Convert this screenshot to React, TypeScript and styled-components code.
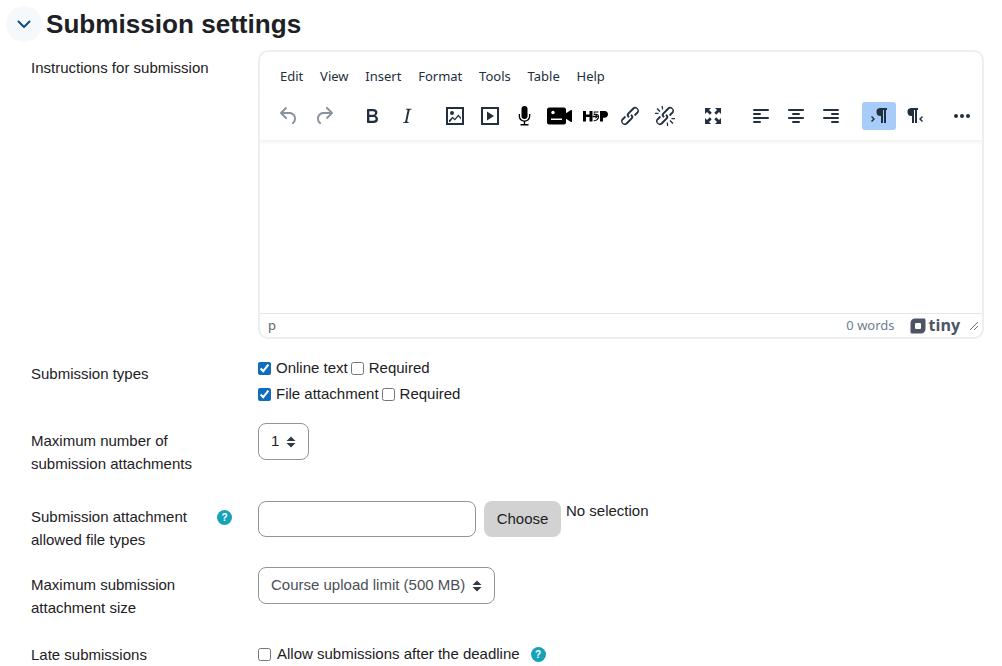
import { FC, ReactNode } from 'react';
import styled, { createGlobalStyle } from 'styled-components';

const GlobalStyle = createGlobalStyle`
  html, body {
    margin: 0;
    height: 666px;
    overflow: hidden;
    background: #fff;
  }
  body {
    font-family: "Liberation Sans", Arial, sans-serif;
    font-size: 15px;
    line-height: 22.5px;
    color: #1d2125;
  }
`;

const Icon: FC<{ children: ReactNode; color?: string }> = ({ children, color = '#222f3e' }) => (
  <svg width="24" height="24" viewBox="0 0 24 24" fill={color}>
    {children}
  </svg>
);

const LINK_PATH =
  'M6.2 12.3a1 1 0 0 1 1.4 1.4l-2 2a2 2 0 1 0 2.6 2.8l4.8-4.8a1 1 0 0 0 0-1.4 1 1 0 1 1 1.4-1.3 2.9 2.9 0 0 1 0 4L9.6 20a3.9 3.9 0 0 1-5.5-5.5l2-2Zm11.6-.6a1 1 0 0 1-1.4-1.4l2-2a2 2 0 1 0-2.6-2.8L11 10.3a1 1 0 0 0 0 1.4A1 1 0 1 1 9.6 13a2.9 2.9 0 0 1 0-4L14.4 4a3.9 3.9 0 0 1 5.5 5.5l-2 2Z';

const AlignIcon: FC<{ align: 'left' | 'center' | 'right' }> = ({ align }) => {
  const short = align === 'left' ? 4 : align === 'center' ? 8 : 12;
  return (
    <Icon>
      <rect x="4" y="5" width="16" height="2" rx="1" />
      <rect x={short} y="9" width="8" height="2" rx="1" />
      <rect x="4" y="13" width="16" height="2" rx="1" />
      <rect x={short} y="17" width="8" height="2" rx="1" />
    </Icon>
  );
};

const icons = {
  undo: (
    <Icon color="#8a939d">
      <path d="M6.4 8H12c3.7 0 6.2 2 6.8 5.1.6 2.7-.4 5.6-2.3 6.8a1 1 0 0 1-1-1.8c1.1-.6 1.8-2.7 1.4-4.6-.5-2.1-2.1-3.5-4.9-3.5H6.4l3.3 3.3a1 1 0 1 1-1.4 1.4l-5-5a1 1 0 0 1 0-1.4l5-5a1 1 0 0 1 1.4 1.4L6.4 8Z" />
    </Icon>
  ),
  redo: (
    <Icon color="#8a939d">
      <path d="M17.6 10H12c-2.8 0-4.4 1.4-4.9 3.5-.4 2 .3 4 1.4 4.6a1 1 0 1 1-1 1.8c-2-1.2-2.9-4.1-2.3-6.8.6-3 3-5.1 6.8-5.1h5.6l-3.3-3.3a1 1 0 1 1 1.4-1.4l5 5a1 1 0 0 1 0 1.4l-5 5a1 1 0 0 1-1.4-1.4l3.3-3.3Z" />
    </Icon>
  ),
  bold: (
    <Icon>
      <path d="M7.8 19c-.3 0-.5 0-.6-.2l-.2-.5V5.7c0-.2 0-.4.2-.5l.6-.2h5c1.5 0 2.7.3 3.5 1 .7.6 1.1 1.4 1.1 2.5a3 3 0 0 1-.6 1.9c-.4.6-1 1-1.6 1.2.4.1.9.3 1.3.6s.8.7 1 1.2c.4.4.5 1 .5 1.6 0 1.3-.4 2.3-1.3 3-.8.7-2.1 1-3.8 1H7.8Zm5-8.3c.6 0 1.2-.1 1.6-.5.4-.3.6-.7.6-1.3 0-1.1-.8-1.7-2.3-1.7H9.3v3.5h3.4Zm.5 6c.7 0 1.3-.1 1.7-.4.4-.4.6-.9.6-1.5s-.2-1-.7-1.4c-.4-.3-1-.4-2-.4H9.4v3.8h4Z" />
    </Icon>
  ),
  italic: (
    <Icon>
      <path d="M16.7 4.7l-.1.9h-.3c-.6 0-1 0-1.4.3-.3.3-.4.6-.5 1.1l-2.1 9.8v.6c0 .5.4.8 1.4.8h.2l-.2.8H8l.2-.8h.2c1.1 0 1.8-.5 2-1.5l2-9.8.1-.5c0-.6-.4-.8-1.4-.8h-.3l.2-.9h5.8Z" />
    </Icon>
  ),
  image: (
    <Icon>
      <path d="M3 3h18v18H3V3Zm2 2v14h14V5H5Z" />
      <circle cx="9" cy="9" r="2" />
      <path d="M6 18v-1.800l3.600-3.400 2.200 2 3.500-4.200 2.700 3v1.900l-2.700-2.900-3.400 4-2.200-2L7 18H6Z" />
    </Icon>
  ),
  media: (
    <Icon>
      <path d="M3 3h18v18H3V3Zm2 2v14h14V5H5Z" />
      <path d="M9 7.500v9l7-4.500-7-4.500Z" />
    </Icon>
  ),
  mic: (
    <Icon color="#000">
      <rect x="8.500" y="2" width="6" height="13" rx="3" />
      <path d="M5.700 10H7v2a4.500 4.500 0 0 0 9 0v-2h1.300v2a5.800 5.800 0 0 1-5.100 5.700V20h3.300v1.500h-8V20h3.300v-2.300A5.800 5.800 0 0 1 5.700 12v-2Z" />
    </Icon>
  ),
  video: (
    <svg width="26" height="24" viewBox="0 0 26 24" fill="#000">
      <path d="M2 3.500h15c1 0 2 1 2 2v3.700l5-3.200c.5-.3 1 0 1 .5v11c0 .5-.5.8-1 .5l-5-3.200v3.700c0 1-1 2-2 2H2c-1 0-2-1-2-2v-13c0-1 1-2 2-2Z" />
      <circle cx="6" cy="8.500" r="1.700" fill="#fff" />
      <rect x="4" y="14.500" width="11" height="1.500" fill="#fff" />
    </svg>
  ),
  h5p: (
    <svg width="26" height="24" viewBox="0 0 26 24" fill="#000">
      <path d="M1 7h3v3.500h3.500V7h3v10.500h-3V13H4v4.500H1V7Z" />
      <path d="M18 7h4.500c2.300 0 3.500 1.400 3.500 3.300s-1.300 3.500-3.600 3.500H21v3.700h-3V7Z" />
      <path d="M11.800 7.500h4.700v1h-4v1.400c2.500-.8 4.600.5 4.600 2.900 0 2.700-2.700 4.700-5.400 4.400v-1c2 .2 4.300-1.300 4.300-3.400 0-1.700-1.700-2.400-3.300-1.800l-.9-.1V7.500Z" />
      <path d="M10.500 11.700h3v-1.500l2.600 2.300-2.600 2.300v-1.500h-3v-1.600Z" />
    </svg>
  ),
  link: (
    <Icon>
      <path d={LINK_PATH} />
    </Icon>
  ),
  unlink: (
    <Icon>
      <path d={LINK_PATH} />
      <path d="M3.500 5 4.500 4l3 3-1 1-3-3ZM8.500 2h1.300l.4 3.500H9L8.500 2ZM2 8.700h3.500v1.200L2 10V8.700ZM19.500 20l1-1-3-3-1 1 3 3ZM15.300 22h-1.300l-.4-3.500h1.200l.5 3.500ZM22 15.300h-3.500v-1.200l3.500-.1v1.300Z" />
    </Icon>
  ),
  fullscreen: (
    <Icon>
      <path d="M4 4h6L8 6l2.800 2.800-1.900 1.900L6 8l-2 2V4ZM20 4v6l-2-2-2.800 2.700-1.900-1.900L16 6l-2-2h6ZM4 20v-6l2 2 2.800-2.700 1.900 1.900L8 18l2 2H4ZM20 20h-6l2-2-2.700-2.800 1.900-1.900L18 16l2-2v6Z" />
    </Icon>
  ),
  ltr: (
    <Icon>
      <path d="M13 4h7v2h-1v13h-2V6h-1v13h-2v-7a4 4 0 0 1-1-8Z" />
      <path d="m4 13 1-1 3 3-3 3-1-1 2-2-2-2Z" />
    </Icon>
  ),
  rtl: (
    <Icon>
      <path d="M9 4h7v2h-1v13h-2V6h-1v13h-2v-7a4 4 0 0 1-1-8Z" />
      <path d="m21 13-1-1-3 3 3 3 1-1-2-2 2-2Z" />
    </Icon>
  ),
  more: (
    <Icon>
      <circle cx="6" cy="12" r="2" />
      <circle cx="12" cy="12" r="2" />
      <circle cx="18" cy="12" r="2" />
    </Icon>
  ),
};

type IconName = keyof typeof icons;
type ToolName = IconName | 'left' | 'center' | 'right';

const toolbarGroups: ToolName[][] = [
  ['undo', 'redo'],
  ['bold', 'italic'],
  ['image', 'media', 'mic', 'video', 'h5p', 'link', 'unlink'],
  ['fullscreen'],
  ['left', 'center', 'right'],
  ['ltr', 'rtl'],
  ['more'],
];

const menuItems = ['Edit', 'View', 'Insert', 'Format', 'Tools', 'Table', 'Help'];

const renderToolbarIcon = (name: ToolName) => {
  if (name === 'left' || name === 'center' || name === 'right') {
    return <AlignIcon align={name} />;
  }
  return icons[name];
};

const SortArrows = () => (
  <svg width="10" height="12" viewBox="0 0 10 12" fill="#343a40">
    <path d="M5 .5 9.500 5H.5L5 .5ZM5 11.500.5 7h9L5 11.500Z" />
  </svg>
);

export default function App() {
  return (
    <>
      <GlobalStyle />
      <SPage>
        <SHeader>
          <SCollapse>
            <svg width="16" height="16" viewBox="0 0 16 16" fill="none" stroke="#0f4c81" strokeWidth="2">
              <path d="M2.500 5.500 8 11l5.500-5.500" strokeLinecap="round" strokeLinejoin="round" />
            </svg>
          </SCollapse>
          <STitle>Submission settings</STitle>
        </SHeader>

        <SRow $top={8}>
          <SLabel $pad={6}>Instructions for submission</SLabel>
          <SEditor>
            <SMenuBar>
              {menuItems.map((item) => (
                <SMenuItem key={item}>{item}</SMenuItem>
              ))}
            </SMenuBar>
            <SToolbar>
              {toolbarGroups.map((group) => (
                <SToolGroup key={group.join()}>
                  {group.map((name) => (
                    <SToolButton key={name} $active={name === 'ltr'}>
                      {renderToolbarIcon(name)}
                    </SToolButton>
                  ))}
                </SToolGroup>
              ))}
            </SToolbar>
            <SEditArea />
            <SStatusBar>
              <SPath>p</SPath>
              <SWords>0 words</SWords>
              <STiny>
                <svg width="16" height="16" viewBox="0 0 16 16">
                  <path
                    fill="#4b5563"
                    fillRule="evenodd"
                    d="M5 .5h9c.8 0 1.500.7 1.500 1.500v9c0 2.500-2 4.500-4.500 4.500H2c-.8 0-1.500-.7-1.500-1.500V5C.5 2.500 2.500.5 5 .5ZM6 5a1 1 0 0 0-1 1v4a1 1 0 0 0 1 1h4a1 1 0 0 0 1-1V6a1 1 0 0 0-1-1H6Z"
                  />
                </svg>
                <span>tiny</span>
              </STiny>
              <svg width="10" height="10" viewBox="0 0 10 10" stroke="#6d737b" strokeWidth="1" fill="none">
                <path d="M1 9 9 1M5 9 9 5" />
              </svg>
            </SStatusBar>
          </SEditor>
        </SRow>

        <SRow $top={18}>
          <SLabel $pad={5}>Submission types</SLabel>
          <SChecks>
            <SCheckLine>
              <SCheck type="checkbox" defaultChecked />
              <SCheckText>Online text</SCheckText>
              <SCheck type="checkbox" />
              <SCheckText>Required</SCheckText>
            </SCheckLine>
            <SCheckLine>
              <SCheck type="checkbox" defaultChecked />
              <SCheckText>File attachment</SCheckText>
              <SCheck type="checkbox" />
              <SCheckText>Required</SCheckText>
            </SCheckLine>
          </SChecks>
        </SRow>

        <SRow $top={17}>
          <SLabel $pad={6}>
            Maximum number of
            <br />
            submission attachments
          </SLabel>
          <SSelect $dark>
            <span>1</span>
            <SortArrows />
          </SSelect>
        </SRow>

        <SRow $top={26}>
          <SLabel $pad={4}>
            Submission attachment
            <br />
            allowed file types
            <SLabelHelp>
              <SHelp>?</SHelp>
            </SLabelHelp>
          </SLabel>
          <SFileRow>
            <SInput />
            <SChoose>Choose</SChoose>
            <SNoSelection>No selection</SNoSelection>
          </SFileRow>
        </SRow>

        <SRow $top={16}>
          <SLabel $pad={6}>
            Maximum submission
            <br />
            attachment size
          </SLabel>
          <SSelect>
            <span>Course upload limit (500 MB)</span>
            <SortArrows />
          </SSelect>
        </SRow>

        <SRow $top={24}>
          <SLabel $pad={0}>Late submissions</SLabel>
          <SLateLine>
            <SCheck type="checkbox" />
            <span>Allow submissions after the deadline</span>
            <SHelp>?</SHelp>
          </SLateLine>
        </SRow>
      </SPage>
    </>
  );
}

const SPage = styled.main`
  padding: 6px 18px 0 0;
`;

const SHeader = styled.header`
  display: flex;
  align-items: center;
  gap: 4px;
  padding-left: 6px;
  height: 36px;
`;

const SCollapse = styled.span`
  display: flex;
  align-items: center;
  justify-content: center;
  width: 36px;
  height: 36px;
  border-radius: 50%;
  background: #f5f9fc;
`;

const STitle = styled.h2`
  margin: 0;
  font-size: 26.1px;
  font-weight: 700;
  line-height: 36px;
  color: #1d2125;
`;

const SRow = styled.div<{ $top: number }>`
  display: flex;
  margin-top: ${({ $top }) => $top}px;
`;

const SLabel = styled.label<{ $pad: number }>`
  position: relative;
  flex: 0 0 258px;
  box-sizing: border-box;
  padding: ${({ $pad }) => $pad}px 0 0 31px;
  line-height: 23px;
`;

const SLabelHelp = styled.span`
  position: absolute;
  left: 207px;
  top: 3px;
`;

const SEditor = styled.div`
  flex: 1;
  display: flex;
  flex-direction: column;
  height: 289px;
  box-sizing: border-box;
  border: 2px solid #eeeeee;
  border-radius: 10px;
  overflow: hidden;
`;

const SMenuBar = styled.div`
  display: flex;
  gap: 16.8px;
  padding: 12px 0 0 20px;
  height: 38px;
  box-sizing: border-box;
`;

const SMenuItem = styled.span`
  font-family: "Noto Sans", "Open Sans", sans-serif;
  font-size: 13px;
  line-height: 24px;
  color: #222f3e;
`;

const SToolbar = styled.div`
  display: flex;
  gap: 14px;
  padding: 12px 0 0 12px;
  height: 50px;
  box-sizing: border-box;
  box-shadow: 0 2px 4px rgb(34 47 62 / 8%);
`;

const SToolGroup = styled.div`
  display: flex;
  gap: 1px;
`;

const SToolButton = styled.span<{ $active?: boolean }>`
  display: flex;
  align-items: center;
  justify-content: center;
  width: 34px;
  height: 28px;
  border-radius: 3px;
  background: ${({ $active }) => ($active ? '#a6ccf7' : 'transparent')};
`;

const SEditArea = styled.div`
  flex: 1;
`;

const SStatusBar = styled.div`
  display: flex;
  align-items: center;
  height: 24px;
  box-sizing: border-box;
  border-top: 1px solid #e6e6e6;
  padding: 0 3px 0 8px;
`;

const SPath = styled.span`
  flex: 1;
  font-family: "Noto Sans", sans-serif;
  font-size: 13px;
  color: #5c6670;
`;

const SWords = styled.span`
  font-family: "Noto Sans", sans-serif;
  font-size: 13px;
  color: #6f7d8c;
`;

const STiny = styled.span`
  display: flex;
  align-items: center;
  gap: 3px;
  margin: 0 9px 0 15px;
  font-family: "Open Sans", sans-serif;
  font-size: 16px;
  font-weight: 700;
  color: #4b5563;
`;

const SChecks = styled.div`
  display: flex;
  flex-direction: column;
  gap: 3px;
`;

const SCheckLine = styled.div`
  display: flex;
  align-items: center;
  height: 23px;
`;

const SCheck = styled.input`
  width: 13px;
  height: 13px;
  margin: 0 5px 0 0;
  accent-color: #0f6cbf;
`;

const SCheckText = styled.span`
  margin-right: 3px;
`;

const SSelect = styled.div<{ $dark?: boolean }>`
  display: inline-flex;
  align-items: center;
  gap: 7px;
  height: 37px;
  box-sizing: border-box;
  padding: 0 12px;
  border: 1px solid #8f959e;
  border-radius: 8px;
  color: ${({ $dark }) => ($dark ? '#1d2125' : '#495057')};
  background: #fff;
`;

const SFileRow = styled.div`
  display: flex;
  align-items: flex-start;
`;

const SInput = styled.div`
  width: 218px;
  height: 36px;
  box-sizing: border-box;
  border: 1px solid #8f959e;
  border-radius: 8px;
`;

const SChoose = styled.button`
  width: 77px;
  height: 36px;
  margin-left: 8px;
  padding: 0;
  border: 0;
  border-radius: 8px;
  background: #d2d2d2;
  font: inherit;
  color: #1d2125;
`;

const SNoSelection = styled.span`
  margin-left: 5px;
  line-height: 20px;
`;

const SLateLine = styled.div`
  display: flex;
  align-items: center;
  gap: 1px;
  height: 23px;
`;

const SHelp = styled.span`
  display: inline-flex;
  align-items: center;
  justify-content: center;
  width: 15px;
  height: 15px;
  margin-left: 10px;
  border-radius: 50%;
  background: #17a2b8;
  color: #fff;
  font-size: 10px;
  font-weight: 700;
  line-height: 15px;
`;
